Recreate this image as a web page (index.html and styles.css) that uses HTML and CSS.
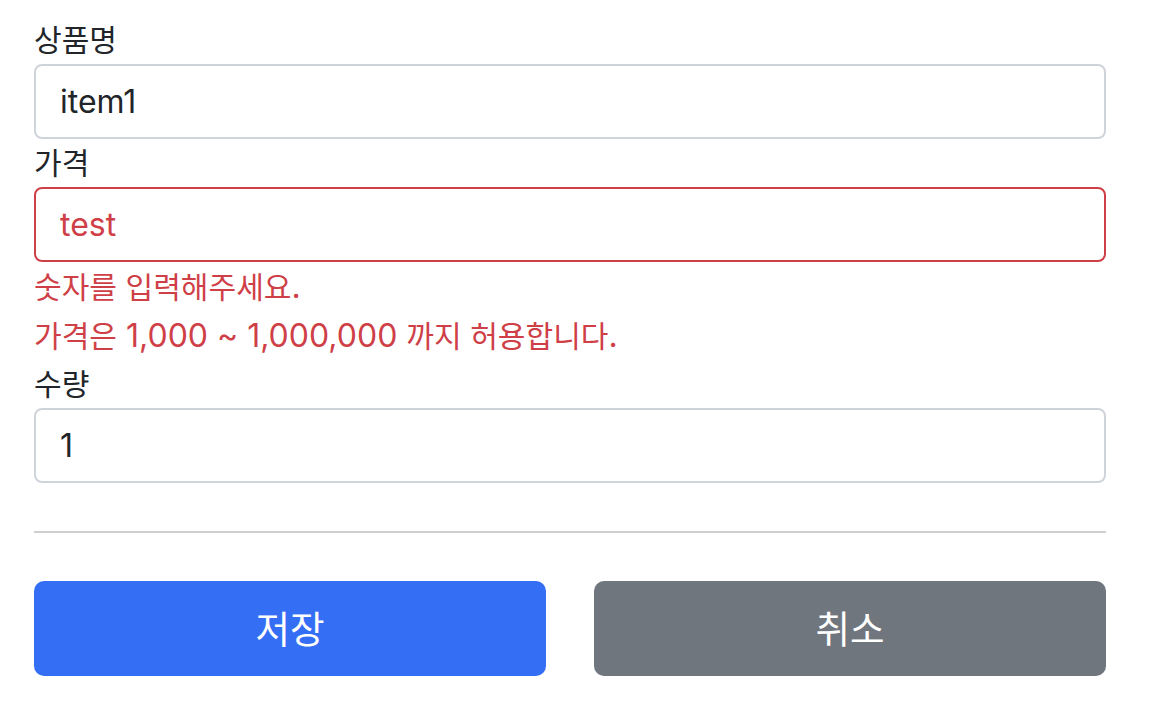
FILE: index.html
```html
<!DOCTYPE html>
<html lang="ko">
<head>
    <meta charset="UTF-8">
    <meta name="viewport" content="width=device-width, initial-scale=1.0">
    <title>상품 수정</title>
    <link rel="stylesheet" href="styles.css">
</head>
<body>
    <div class="container">
        <form action="" method="post">
            <div>
                <label for="itemName"><span class="ko">상품명</span></label>
                <input type="text" id="itemName" name="itemName" class="form-control" value="item1">
            </div>
            <div>
                <label for="price"><span class="ko">가격</span></label>
                <input type="text" id="price" name="price" class="form-control field-error" value="test">
                <div class="field-error">
                    <span class="ko">숫자를 입력해주세요</span>.<br>
                    <span class="ko">가격은</span> 1,000 ~ 1,000,000 <span class="ko">까지 허용합니다</span>.
                </div>
            </div>
            <div>
                <label for="quantity"><span class="ko">수량</span></label>
                <input type="text" id="quantity" name="quantity" class="form-control" value="1">
            </div>

            <hr class="my-4">

            <div class="row">
                <button class="btn btn-primary" type="submit"><span class="ko">저장</span></button>
                <button class="btn btn-secondary" type="button"><span class="ko">취소</span></button>
            </div>
        </form>
    </div>
</body>
</html>
```

FILE: styles.css
```css
body {
    margin: 0;
    font-family: Inter, "Noto Sans CJK KR", sans-serif;
    font-size: 32px;
    line-height: 48px;
    color: #212529;
    background: #fff;
}
.container {
    padding: 16px 46px 0 34px;
}
.ko {
    font-size: 0.94em;
    line-height: 1;
}
label {
    display: block;
}
.form-control {
    display: block;
    box-sizing: border-box;
    width: 100%;
    height: 75px;
    padding: 12px 24px;
    font-family: inherit;
    font-size: 32px;
    line-height: 48px;
    color: #212529;
    background: #fff;
    border: 2px solid #ced4da;
    border-radius: 8px;
    outline: none;
}
.field-error {
    color: #cf3f47;
}
div.field-error {
    line-height: 49px;
}
.form-control.field-error {
    border-color: #cf3f47;
}
.my-4 {
    margin: 48px 0;
    border: 0;
    border-top: 2px solid #cdcecf;
}
.row {
    display: grid;
    grid-template-columns: 1fr 1fr;
    gap: 48px;
}
.btn {
    height: 95px;
    font-family: inherit;
    font-size: 40px;
    line-height: 60px;
    color: #fff;
    border: 0;
    border-radius: 10px;
    cursor: pointer;
}
.btn-primary {
    background-color: #346ef5;
}
.btn-secondary {
    background-color: #70767e;
}
```
